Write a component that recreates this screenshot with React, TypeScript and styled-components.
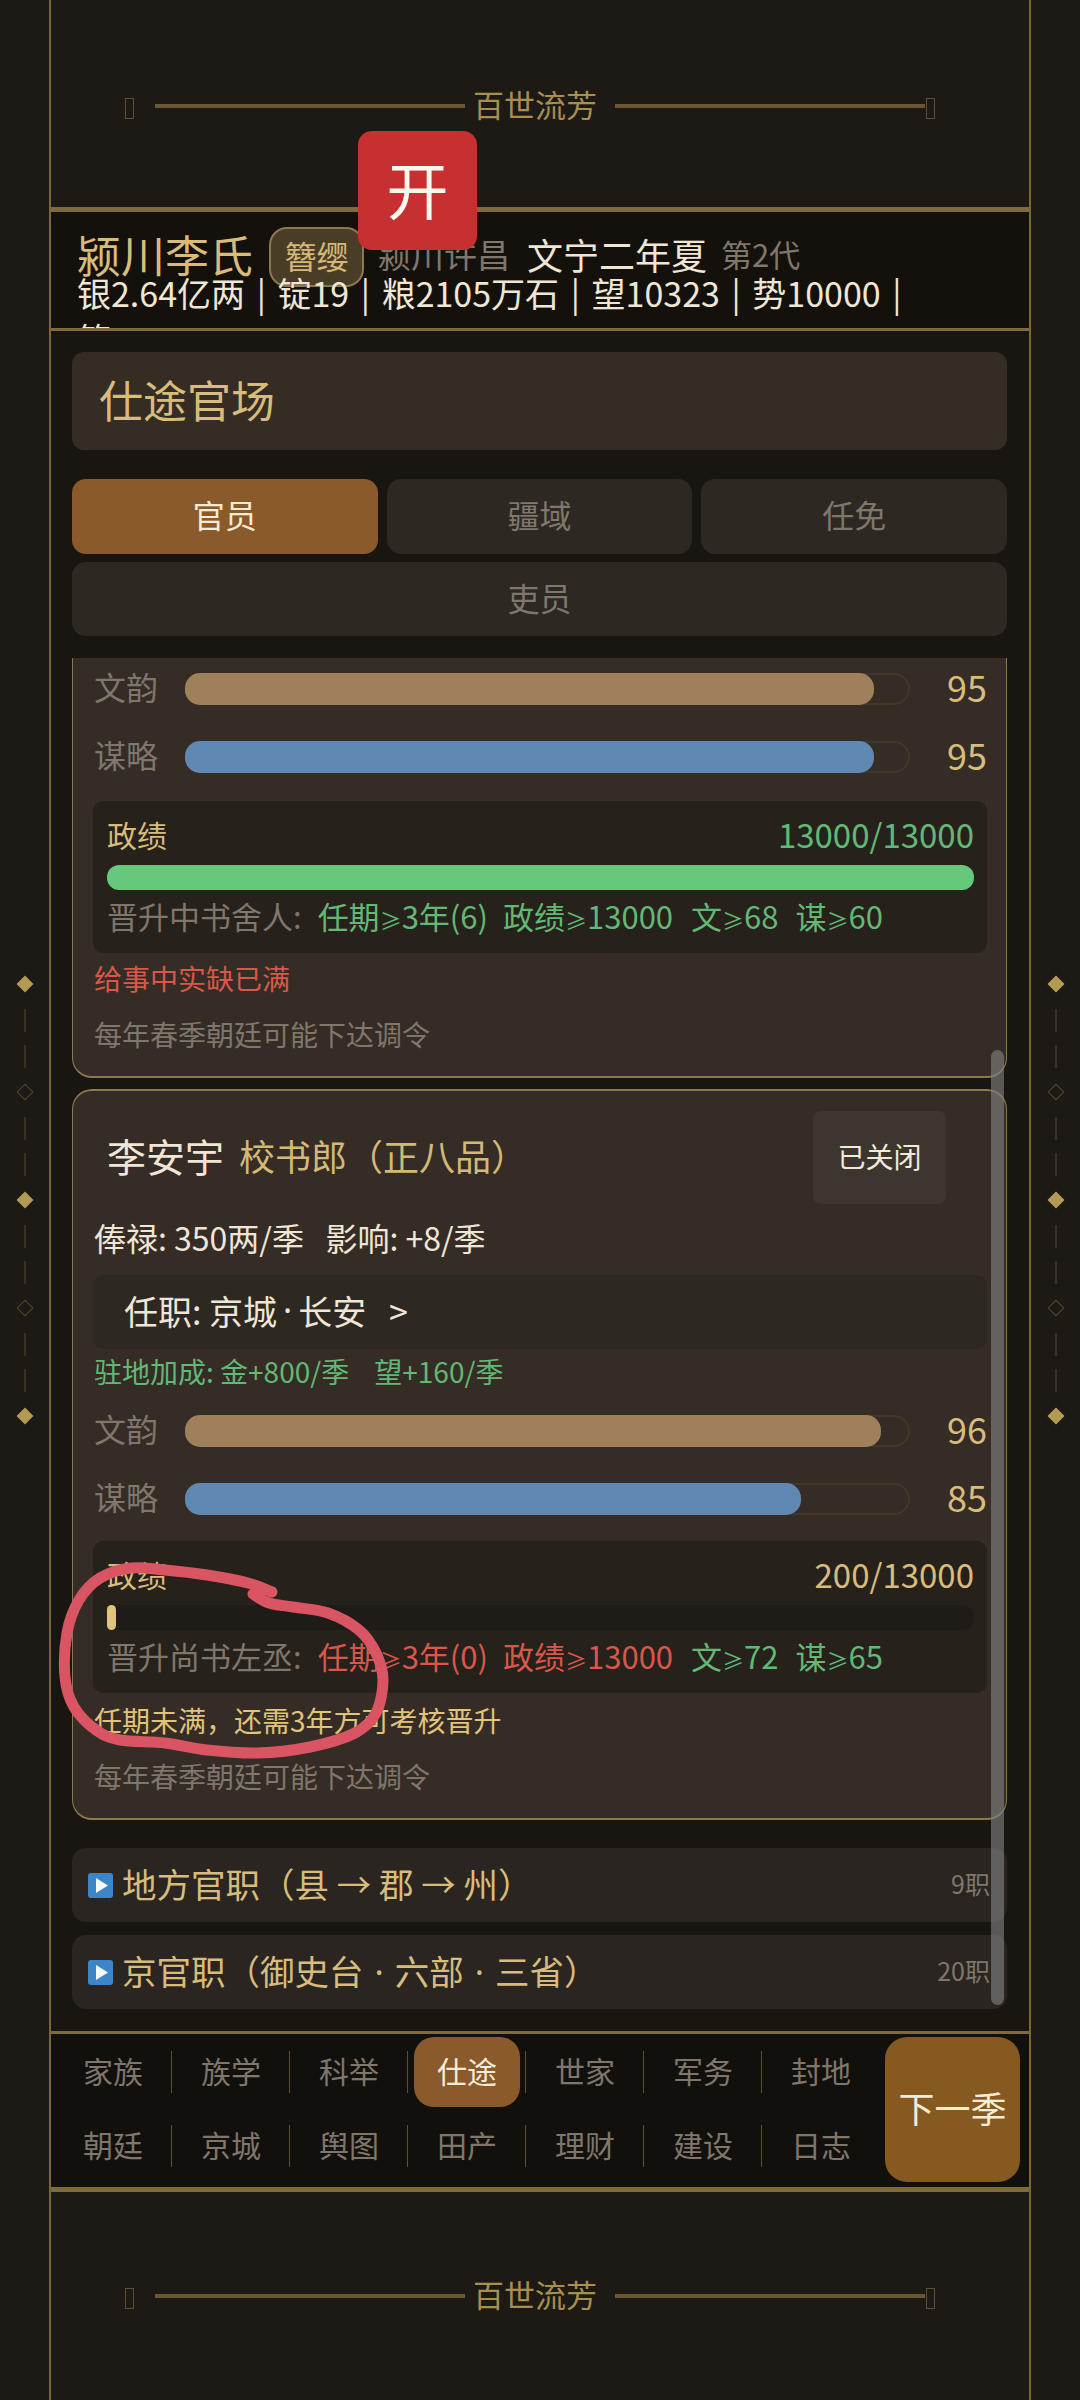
import React from "react";
import styled, { createGlobalStyle } from "styled-components";

const Global = createGlobalStyle`
  html, body { margin: 0; padding: 0; background: #1d1914; }
  body { width: 1080px; height: 2400px; overflow: hidden; font-family: "Noto Sans CJK SC", "Noto Sans", sans-serif; }
  * { box-sizing: border-box; }
`;

const Page = styled.div`
  position: relative;
  width: 1080px;
  height: 2400px;
  display: grid;
  grid-template-columns: 49px 982px 49px;
  background: #1d1914;
  overflow: hidden;
`;
const Rail = styled.div`
  display: flex;
  flex-direction: column;
  align-items: center;
  justify-content: center;
`;
const Diamond = styled.div<{ $filled: boolean }>`
  width: 12px;
  height: 12px;
  margin: 2.5px 0;
  transform: rotate(45deg);
  background: ${(p) => (p.$filled ? "#b39a55" : "transparent")};
  border: ${(p) => (p.$filled ? "none" : "1.5px solid #54472c")};
`;
const Connector = styled.div`
  display: flex;
  flex-direction: column;
  gap: 13px;
  padding: 16px 0;
`;
const Dash = styled.div`
  width: 2px;
  height: 23px;
  background: #3a3120;
`;
const Frame = styled.div`
  display: flex;
  flex-direction: column;
  height: 2400px;
  border-left: 2px solid #7a6638;
  border-right: 2px solid #7a6638;
`;
const Deco = styled.div<{ $h: number; $pt: number }>`
  flex: none;
  height: ${(p) => p.$h}px;
  padding: ${(p) => p.$pt}px 0 0 74px;
  display: flex;
  align-items: center;
`;
const Tofu = styled.span`
  width: 9px;
  height: 21px;
  margin-top: 4px;
  border: 1px solid #5d4f30;
  flex: none;
`;
const DecoLine = styled.span<{ $ml: number; $mr: number }>`
  width: 310px;
  height: 4px;
  margin: 0 ${(p) => p.$mr}px 0 ${(p) => p.$ml}px;
  background: #6b5833;
  flex: none;
`;
const DecoText = styled.span`
  width: 150px;
  text-align: center;
  padding: 0 10px 4px 0;
  font-size: 31px;
  line-height: 40px;
  color: #a68f4f;
  flex: none;
`;
const GoldRule = styled.div<{ $h: number }>`
  flex: none;
  height: ${(p) => p.$h}px;
  background: #7f6a3a;
`;
const Header = styled.header`
  flex: none;
  height: 116px;
  padding: 26px 60px 0 26px;
  background: #14110d;
  overflow: hidden;
`;
const TitleRow = styled.div`
  height: 32px;
  display: flex;
  align-items: center;
  white-space: nowrap;
`;
const Clan = styled.span`
  font-size: 44px;
  line-height: 50px;
  color: #d8bc7c;
`;
const Badge = styled.span`
  margin: 5px 0 0 16px;
  width: 95px;
  height: 60px;
  padding-bottom: 4px;
  display: flex;
  align-items: center;
  justify-content: center;
  flex: none;
  font-size: 32px;
  color: #d4b878;
  background: #4a3d25;
  border: 2px solid #8a7850;
  border-radius: 18px;
`;
const Muted = styled.span<{ $ml: number; $size: number }>`
  margin-left: ${(p) => p.$ml}px;
  font-size: ${(p) => p.$size}px;
  line-height: 40px;
  color: #7f766c;
`;
const DateText = styled.span`
  margin-left: 17px;
  font-size: 36px;
  line-height: 40px;
  color: #f0e6d6;
`;
const Stats = styled.div`
  font-size: 34px;
  line-height: 46px;
  color: #efe6d6;
  word-spacing: 4px;
`;
const StatsTail = styled.span`
  white-space: nowrap;
`;
const Main = styled.main`
  flex: 1;
  min-height: 0;
  padding: 21px 22px 0 21px;
  background: #191510;
  display: flex;
  flex-direction: column;
  position: relative;
`;
const TitlePanel = styled.div`
  flex: none;
  height: 98px;
  padding: 0 0 5px 27px;
  display: flex;
  align-items: center;
  background: #352c24;
  border-radius: 12px;
  font-size: 44px;
  color: #d8bc7c;
`;
const Tabs = styled.div`
  flex: none;
  margin-top: 29px;
  display: grid;
  grid-template-columns: repeat(3, 1fr);
  column-gap: 9px;
  row-gap: 8px;
`;
const Tab = styled.div<{ $active?: boolean; $wide?: boolean }>`
  height: 74.5px;
  padding-bottom: 4px;
  display: flex;
  align-items: center;
  justify-content: center;
  border-radius: 14px;
  font-size: 32px;
  grid-column: ${(p) => (p.$wide ? "1 / -1" : "auto")};
  background: ${(p) => (p.$active ? "#8b5a2b" : "#2d2822")};
  color: ${(p) => (p.$active ? "#f5ecd8" : "#7f766c")};
`;
const Scroll = styled.div`
  flex: 1;
  min-height: 0;
  margin-top: 22px;
  overflow: hidden;
  display: flex;
  flex-direction: column;
`;
const Card = styled.section<{ $clipped?: boolean }>`
  flex: none;
  background: #352c26;
  border: 1px solid #8c7a4e;
  border-bottom-width: 2px;
  border-top-width: ${(p) => (p.$clipped ? "0" : "2px")};
  border-radius: ${(p) => (p.$clipped ? "0 0 20px 20px" : "20px")};
  margin-top: ${(p) => (p.$clipped ? "0" : "11px")};
  padding: ${(p) => (p.$clipped ? "15px" : "20px")} 19px 22px 21px;
`;
const NameRow = styled.div`
  height: 93px;
  padding-left: 13px;
  padding-right: 41px;
  display: flex;
  align-items: center;
  white-space: nowrap;
`;
const PersonName = styled.span`
  font-size: 39px;
  margin-bottom: 5px;
  color: #efe6d6;
`;
const Office = styled.span`
  margin: 0 0 5px 15px;
  font-size: 36px;
  color: #d4b878;
`;
const CloseBtn = styled.div`
  margin-left: auto;
  width: 133px;
  height: 93px;
  padding-bottom: 4px;
  border-radius: 8px;
  background: #3c362f;
  color: #f3ead9;
  font-size: 28px;
  display: flex;
  align-items: center;
  justify-content: center;
`;
const Line = styled.div<{ $color: string; $size: number; $mt: number }>`
  margin: ${(p) => p.$mt - 2}px 0 2px;
  height: 36px;
  font-size: ${(p) => p.$size}px;
  line-height: 36px;
  color: ${(p) => p.$color};
  white-space: pre;
`;
const PostBox = styled.div`
  margin: 20px 0 0 -1px;
  height: 74px;
  padding: 0 0 4px 31px;
  display: flex;
  align-items: center;
  background: #2d2822;
  border-radius: 10px;
  font-size: 34px;
  color: #efe6d6;
  white-space: pre;
`;
const Dot = styled.span<{ $pad: number }>`
  font-family: "Noto Sans", sans-serif;
  padding: 0 ${(p) => p.$pad}px;
`;
const StatRow = styled.div<{ $mt: number }>`
  margin-top: ${(p) => p.$mt}px;
  height: 31px;
  display: flex;
  align-items: center;
`;
const StatLabel = styled.span`
  width: 91px;
  flex: none;
  padding-bottom: 5px;
  font-size: 32px;
  color: #7f766c;
`;
const Track = styled.div`
  flex: 1;
  height: 32px;
  border-radius: 16px;
  box-shadow: inset 0 0 0 2px #40372e;
  background: #352c26;
`;
const Fill = styled.div<{ $pct: number; $color: string }>`
  width: ${(p) => p.$pct}%;
  height: 100%;
  border-radius: 15px;
  background: ${(p) => p.$color};
`;
const StatValue = styled.span`
  width: 77px;
  flex: none;
  padding-bottom: 5px;
  text-align: right;
  font-size: 36px;
  color: #d8bc7c;
`;
const Merit = styled.div<{ $mt: number }>`
  margin: ${(p) => p.$mt}px 0 0 -1px;
  padding: 15px 13px 0 14px;
  height: 152px;
  background: #26211b;
  border-radius: 10px;
`;
const MeritHead = styled.div`
  display: flex;
  justify-content: space-between;
  align-items: center;
  height: 36px;
`;
const MeritLabel = styled.span`
  font-size: 30px;
  color: #d8bc7c;
`;
const MeritValue = styled.span<{ $color: string }>`
  font-size: 33px;
  color: ${(p) => p.$color};
`;
const MeritTrack = styled.div`
  margin-top: 13px;
  height: 25px;
  border-radius: 12px;
  background: #1f1b17;
`;
const MeritFill = styled.div<{ $pct: number; $color: string }>`
  width: ${(p) => p.$pct}%;
  height: 100%;
  border-radius: 12px;
  background: ${(p) => p.$color};
`;
const Req = styled.div`
  margin-top: 8px;
  height: 36px;
  font-size: 31px;
  line-height: 36px;
  color: #7f766c;
  white-space: pre;
  display: flex;
`;
const ReqItem = styled.span<{ $ok: boolean; $ml: number }>`
  margin-left: ${(p) => p.$ml}px;
  color: ${(p) => (p.$ok ? "#62b875" : "#d9574a")};
`;
const Ge = styled.span`
  font-size: 22px;
`;
const Accordion = styled.div<{ $mt: number }>`
  flex: none;
  margin-top: ${(p) => p.$mt}px;
  height: 74px;
  padding: 0 17px 0 16px;
  display: flex;
  align-items: center;
  background: #2a2520;
  border-radius: 14px;
  white-space: nowrap;
`;
const AccIcon = styled.svg`
  width: 25px;
  height: 25px;
  flex: none;
`;
const AccTitle = styled.span`
  margin: 0 0 4px 9px;
  font-size: 34.5px;
  color: #d8bc7c;
`;
const AccCount = styled.span`
  margin: 0 0 4px auto;
  font-size: 25px;
  color: #7f766c;
`;
const ScrollThumb = styled.div`
  position: absolute;
  right: 25px;
  top: 719px;
  width: 13px;
  height: 955px;
  border-radius: 7px;
  background: rgba(130, 130, 130, 0.62);
`;
const Nav = styled.nav`
  flex: none;
  height: 153px;
  padding: 0 9px 0 3px;
  display: flex;
  background: #12100d;
`;
const NavGrid = styled.div`
  width: 826px;
  display: grid;
  grid-template-columns: repeat(7, 118px);
  grid-auto-rows: 74px;
  padding-top: 1px;
`;
const NavCell = styled.div<{ $divider: boolean }>`
  position: relative;
  display: flex;
  align-items: center;
  justify-content: center;
  &::after {
    content: "";
    display: ${(p) => (p.$divider ? "block" : "none")};
    position: absolute;
    right: 0;
    top: 16px;
    width: 1px;
    height: 42px;
    background: #5e4f2e;
  }
`;
const NavLabel = styled.span<{ $active: boolean }>`
  width: 106px;
  height: 70px;
  padding-bottom: 4px;
  display: flex;
  align-items: center;
  justify-content: center;
  border-radius: 20px;
  font-size: 30px;
  background: ${(p) => (p.$active ? "#8b5a2b" : "transparent")};
  color: ${(p) => (p.$active ? "#f5ecd8" : "#7f766c")};
`;
const NextBtn = styled.div`
  margin: 3px 0 0 5px;
  width: 136px;
  height: 145px;
  padding-bottom: 5px;
  border-radius: 22px;
  background: #85591f;
  color: #f5ecd8;
  font-size: 36px;
  display: flex;
  align-items: center;
  justify-content: center;
`;
const StartBtn = styled.div`
  position: absolute;
  left: 358px;
  top: 131px;
  width: 119px;
  height: 119px;
  padding-bottom: 5px;
  border-radius: 14px;
  background: #c73030;
  color: #fff8ee;
  font-size: 62px;
  display: flex;
  align-items: center;
  justify-content: center;
`;
const Scribble = styled.svg`
  position: absolute;
  inset: 0;
  width: 1080px;
  height: 2400px;
  pointer-events: none;
`;

const ornamentCount = [true, false, true, false, true];
const SideRail = () => (
  <Rail>
    {ornamentCount.map((filled, i) => (
      <React.Fragment key={i}>
        <Diamond $filled={filled} />
        {i < ornamentCount.length - 1 && (
          <Connector>
            <Dash />
            <Dash />
          </Connector>
        )}
      </React.Fragment>
    ))}
  </Rail>
);

const Ornament = ({ h, pt }: { h: number; pt: number }) => (
  <Deco $h={h} $pt={pt}>
    <Tofu />
    <DecoLine $ml={21} $mr={0} />
    <DecoText>百世流芳</DecoText>
    <DecoLine $ml={0} $mr={1} />
    <Tofu />
  </Deco>
);

const Stat = ({ label, value, color, mt }: { label: string; value: number; color: string; mt: number }) => (
  <StatRow $mt={mt}>
    <StatLabel>{label}</StatLabel>
    <Track>
      <Fill $pct={value} $color={color} />
    </Track>
    <StatValue>{value}</StatValue>
  </StatRow>
);

type ReqEntry = { head: string; tail: string; ok: boolean; ml: number };
const MeritBox = ({
  mt, value, valueColor, pct, fill, label, reqs,
}: { mt: number; value: string; valueColor: string; pct: number; fill: string; label: string; reqs: ReqEntry[] }) => (
  <Merit $mt={mt}>
    <MeritHead>
      <MeritLabel>政绩</MeritLabel>
      <MeritValue $color={valueColor}>{value}</MeritValue>
    </MeritHead>
    <MeritTrack>
      <MeritFill $pct={pct} $color={fill} />
    </MeritTrack>
    <Req>
      {label}
      {reqs.map((r) => (
        <ReqItem key={r.head} $ok={r.ok} $ml={r.ml}>
          {r.head}
          <Ge>≥</Ge>
          {r.tail}
        </ReqItem>
      ))}
    </Req>
  </Merit>
);

const PlayIcon = () => (
  <AccIcon viewBox="0 0 25 25">
    <rect width="25" height="25" rx="3" fill="#3c86c8" />
    <path d="M8 5 L20 12.5 L8 20 Z" fill="#f4f8fc" />
  </AccIcon>
);

const navRows = [
  ["家族", "族学", "科举", "仕途", "世家", "军务", "封地"],
  ["朝廷", "京城", "舆图", "田产", "理财", "建设", "日志"],
];

const scribble: [number, number][] = [
  [272, 1592], [248, 1583], [207, 1575], [165, 1570], [131, 1568], [100, 1578], [79, 1600], [67, 1633],
  [65, 1677], [74, 1707], [96, 1730], [120, 1740], [165, 1743], [207, 1750], [258, 1753], [310, 1747],
  [355, 1733], [376, 1713], [383, 1680], [376, 1653], [359, 1630], [328, 1613], [293, 1607], [269, 1603], [253, 1594],
];
const smoothPath = (pts: [number, number][]) => {
  let d = `M${pts[0][0]} ${pts[0][1]}`;
  for (let i = 0; i < pts.length - 1; i++) {
    const p0 = pts[Math.max(i - 1, 0)];
    const p1 = pts[i];
    const p2 = pts[i + 1];
    const p3 = pts[Math.min(i + 2, pts.length - 1)];
    d += ` C${p1[0] + (p2[0] - p0[0]) / 6} ${p1[1] + (p2[1] - p0[1]) / 6} ${p2[0] - (p3[0] - p1[0]) / 6} ${p2[1] - (p3[1] - p1[1]) / 6} ${p2[0]} ${p2[1]}`;
  }
  return d;
};

export default function App() {
  return (
    <Page>
      <Global />
      <SideRail />
      <Frame>
        <Ornament h={207} pt={5} />
        <GoldRule $h={5} />
        <Header>
          <TitleRow>
            <Clan>颍川李氏</Clan>
            <Badge>簪缨</Badge>
            <Muted $ml={14} $size={33}>颍川许昌</Muted>
            <DateText>文宁二年夏</DateText>
            <Muted $ml={14} $size={31}>第2代</Muted>
          </TitleRow>
          <Stats>银2.64亿两 | 锭19 | 粮2105万石 | 望10323 | 势10000 | <StatsTail>第187</StatsTail></Stats>
        </Header>
        <GoldRule $h={3} />
        <Main>
          <TitlePanel>仕途官场</TitlePanel>
          <Tabs>
            <Tab $active>官员</Tab>
            <Tab>疆域</Tab>
            <Tab>任免</Tab>
            <Tab $wide>吏员</Tab>
          </Tabs>
          <Scroll>
            <Card $clipped>
              <Stat label="文韵" value={95} color="#a0805a" mt={0} />
              <Stat label="谋略" value={95} color="#5f88b3" mt={37} />
              <MeritBox
                mt={29}
                value="13000/13000"
                valueColor="#62b875"
                pct={100}
                fill="#66c87a"
                label="晋升中书舍人:"
                reqs={[
                  { head: "任期", tail: "3年(6)", ok: true, ml: 16 },
                  { head: "政绩", tail: "13000", ok: true, ml: 15 },
                  { head: "文", tail: "68", ok: true, ml: 18 },
                  { head: "谋", tail: "60", ok: true, ml: 17 },
                ]}
              />
              <Line $color="#d9574a" $size={28} $mt={9}>给事中实缺已满</Line>
              <Line $color="#7f766c" $size={28} $mt={22}>每年春季朝廷可能下达调令</Line>
            </Card>
            <Card>
              <NameRow>
                <PersonName>李安宇</PersonName>
                <Office>校书郎（正八品）</Office>
                <CloseBtn>已关闭</CloseBtn>
              </NameRow>
              <Line $color="#efe6d6" $size={32} $mt={17}>俸禄: 350两/季   影响: +8/季</Line>
              <PostBox>任职: 京城<Dot $pad={6}>·</Dot>长安   &gt;</PostBox>
              <Line $color="#62b875" $size={28} $mt={6}>驻地加成: 金+800/季    望+160/季</Line>
              <Stat label="文韵" value={96} color="#a0805a" mt={26} />
              <Stat label="谋略" value={85} color="#5f88b3" mt={37} />
              <MeritBox
                mt={27}
                value="200/13000"
                valueColor="#d8bc7c"
                pct={1}
                fill="#e0c47a"
                label="晋升尚书左丞:"
                reqs={[
                  { head: "任期", tail: "3年(0)", ok: false, ml: 16 },
                  { head: "政绩", tail: "13000", ok: false, ml: 15 },
                  { head: "文", tail: "72", ok: true, ml: 18 },
                  { head: "谋", tail: "65", ok: true, ml: 17 },
                ]}
              />
              <Line $color="#e0c47a" $size={28} $mt={11}>任期未满，还需3年方可考核晋升</Line>
              <Line $color="#7f766c" $size={28} $mt={22}>每年春季朝廷可能下达调令</Line>
            </Card>
            <Accordion $mt={28}>
              <PlayIcon />
              <AccTitle>地方官职（县 → 郡 → 州）</AccTitle>
              <AccCount>9职</AccCount>
            </Accordion>
            <Accordion $mt={13}>
              <PlayIcon />
              <AccTitle>京官职（御史台<Dot $pad={11}>·</Dot>六部<Dot $pad={11}>·</Dot>三省）</AccTitle>
              <AccCount>20职</AccCount>
            </Accordion>
          </Scroll>
          <ScrollThumb />
        </Main>
        <GoldRule $h={3} />
        <Nav>
          <NavGrid>
            {navRows.map((row) =>
              row.map((item, i) => (
                <NavCell key={item} $divider={i < row.length - 1}>
                  <NavLabel $active={item === "仕途"}>{item}</NavLabel>
                </NavCell>
              ))
            )}
          </NavGrid>
          <NextBtn>下一季</NextBtn>
        </Nav>
        <GoldRule $h={5} />
        <Ornament h={208} pt={0} />
      </Frame>
      <SideRail />
      <StartBtn>开</StartBtn>
      <Scribble viewBox="0 0 1080 2400">
        <path d={smoothPath(scribble)} fill="none" stroke="#d95563" strokeWidth={11} strokeLinecap="round" strokeLinejoin="round" />
      </Scribble>
    </Page>
  );
}
